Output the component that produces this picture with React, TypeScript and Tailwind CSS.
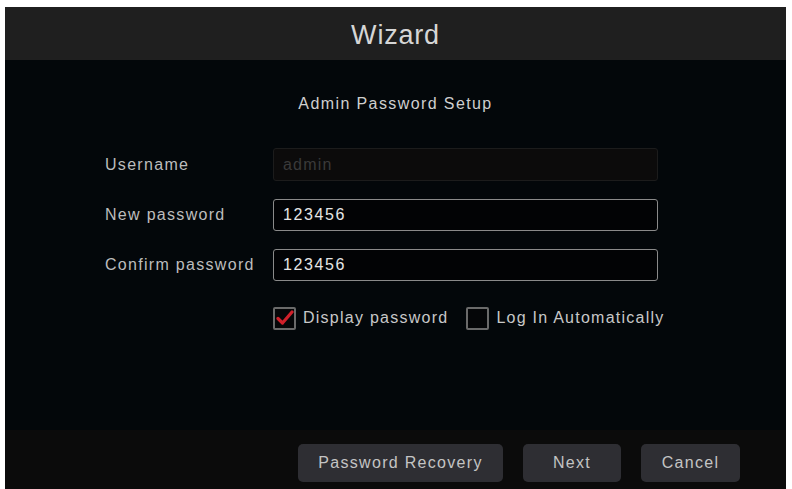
import React, { useState } from 'react';

const Field: React.FC<{ label: string; value: string; disabled?: boolean }> = ({ label, value, disabled }) => (
  <div className="flex items-center">
    <span className="w-[168px] text-[16px] tracking-[1.3px] text-[#bdbdbd]">{label}</span>
    <div
      className={
        disabled
          ? 'flex h-[33px] w-[385px] items-center rounded-[3px] border border-[#1c1c1c] bg-[#0c0b0b] pl-[9px] text-[16px] tracking-[1.2px] text-[#3a3a3a]'
          : 'flex h-[32px] w-[385px] items-center rounded-[3px] border border-[#8a8a8a] bg-[#020305] pl-[9px] text-[16px] tracking-[1.6px] text-[#e6e6e6]'
      }
    >
      {value}
    </div>
  </div>
);

const Check: React.FC<{ checked: boolean; label: string; onToggle: () => void }> = ({ checked, label, onToggle }) => (
  <button onClick={onToggle} className="flex items-center gap-[7px]">
    <span className="flex h-[23px] w-[23px] items-center justify-center rounded-[2px] border-2 border-[#6a6a6a] bg-[#050608]">
      {checked && (
        <svg width="18" height="16" viewBox="0 0 18 16">
          <path d="M2 8.5 L6.5 13 L16 2" fill="none" stroke="#d0202a" strokeWidth="3.2" strokeLinecap="round" strokeLinejoin="round" />
        </svg>
      )}
    </span>
    <span className="text-[16px] tracking-[1.25px] text-[#c8c8c8]">{label}</span>
  </button>
);

export default function App() {
  const [showPwd, setShowPwd] = useState(true);
  const [autoLogin, setAutoLogin] = useState(false);

  return (
    <div className="h-[489px] w-[792px] bg-white pl-[5px] pr-[6px] pt-[7px]" style={{ fontFamily: '"Liberation Sans", Arial, sans-serif' }}>
      <div className="flex h-full flex-col bg-[#03070a]">
        <div className="flex h-[53px] items-center justify-center bg-[#1f1f1f] pt-[3px] text-[27px] tracking-[0.8px] text-[#d6d6d6]">
          Wizard
        </div>

        <div className="flex flex-1 flex-col">
          <div className="mt-[32px] text-center text-[16px] tracking-[1.4px] text-[#cfcfcf]">Admin Password Setup</div>

          <div className="ml-[100px] mt-[32px] flex flex-col gap-[18px]">
            <Field label="Username" value="admin" disabled />
            <Field label="New password" value="123456" />
            <Field label="Confirm password" value="123456" />
          </div>

          <div className="ml-[268px] mt-[25px] flex items-center gap-[18px]">
            <Check checked={showPwd} label="Display password" onToggle={() => setShowPwd(!showPwd)} />
            <Check checked={autoLogin} label="Log In Automatically" onToggle={() => setAutoLogin(!autoLogin)} />
          </div>
        </div>

        <div className="flex h-[59px] items-start justify-end gap-[20px] bg-[#0b0b0b] pr-[46px] pt-[14px]">
          <button className="h-[38px] w-[205px] rounded-[5px] bg-[#2e2e33] text-[16px] tracking-[1.3px] text-[#c4c4c4]">Password Recovery</button>
          <button className="h-[38px] w-[98px] rounded-[5px] bg-[#2e2e33] text-[16px] tracking-[1.3px] text-[#c4c4c4]">Next</button>
          <button className="h-[38px] w-[99px] rounded-[5px] bg-[#2e2e33] text-[16px] tracking-[1.3px] text-[#c4c4c4]">Cancel</button>
        </div>
      </div>
    </div>
  );
}
